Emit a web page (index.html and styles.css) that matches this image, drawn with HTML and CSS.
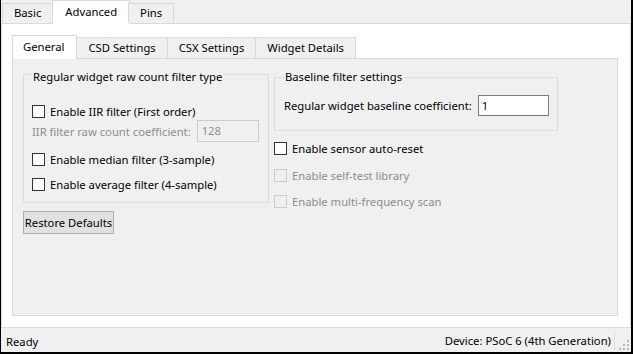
FILE: index.html
```html
<!DOCTYPE html>
<html lang="en">
<head>
  <meta charset="UTF-8">
  <title>CapSense Configurator - Advanced</title>
  <link rel="stylesheet" href="styles.css">
</head>
<body>
  <div class="window">
    <div class="tabstrip outer-tabs">
      <div class="tab">Basic</div>
      <div class="tab active">Advanced</div>
      <div class="tab">Pins</div>
    </div>

    <div class="outer-page">
      <div class="tabstrip inner-tabs">
        <div class="tab active">General</div>
        <div class="tab">CSD Settings</div>
        <div class="tab">CSX Settings</div>
        <div class="tab">Widget Details</div>
      </div>

      <div class="inner-page">
        <div class="col-left">
          <div class="group raw-group">
            <span class="group-title">Regular widget raw count filter type</span>
            <label class="check row-iir"><span class="box"></span>Enable IIR filter (First order)</label>
            <div class="field disabled">
              <span>IIR filter raw count coefficient:</span>
              <span class="input coef-input">128</span>
            </div>
            <label class="check row-median"><span class="box"></span>Enable median filter (3-sample)</label>
            <label class="check row-average"><span class="box"></span>Enable average filter (4-sample)</label>
          </div>
          <button class="btn">Restore Defaults</button>
        </div>

        <div class="col-right">
          <div class="group baseline-group">
            <span class="group-title">Baseline filter settings</span>
            <div class="field">
              <span>Regular widget baseline coefficient:</span>
              <span class="input baseline-input">1</span>
            </div>
          </div>
          <label class="check row-reset"><span class="box"></span>Enable sensor auto-reset</label>
          <label class="check disabled row-selftest"><span class="box"></span>Enable self-test library</label>
          <label class="check disabled row-multi"><span class="box"></span>Enable multi-frequency scan</label>
        </div>
      </div>
    </div>

    <div class="statusbar">
      <span class="status-text">Ready</span>
      <span class="device">Device: PSoC 6 (4th Generation)</span>
      <svg class="grip" width="12" height="12" viewBox="0 0 12 12">
        <rect x="9" y="1" width="2" height="2" fill="#b8b8b8"/>
        <rect x="9" y="5" width="2" height="2" fill="#b8b8b8"/>
        <rect x="5" y="5" width="2" height="2" fill="#b8b8b8"/>
        <rect x="9" y="9" width="2" height="2" fill="#b8b8b8"/>
        <rect x="5" y="9" width="2" height="2" fill="#b8b8b8"/>
        <rect x="1" y="9" width="2" height="2" fill="#b8b8b8"/>
      </svg>
    </div>
  </div>
</body>
</html>
```

FILE: styles.css
```css
body {
  margin: 0;
  font-family: 'Noto Sans', 'Segoe UI', Tahoma, sans-serif;
  font-size: 11.25px;
  color: #000;
  background-color: #fff;
}

.window {
  width: 633px;
  height: 354px;
  box-sizing: border-box;
  border-left: 1px solid #000;
  border-right: 2px solid #000;
  border-bottom: 2px solid #000;
  background-color: #f0f0f0;
  display: flex;
  flex-direction: column;
}

/* tabs */

.tabstrip {
  display: flex;
  align-items: flex-end;
  position: relative;
  z-index: 1;
}

.tab {
  box-sizing: border-box;
  height: 20px;
  line-height: 18px;
  padding: 0 11px;
  background-color: #f0f0f0;
  border: 1px solid #d9d9d9;
  border-bottom: none;
  margin-left: -1px;
  white-space: nowrap;
}

.tab:first-child {
  margin-left: 0;
}

.tab.active {
  height: 24px;
  line-height: 21px;
  padding: 0 12px;
  background-color: #fff;
  margin-bottom: -1px;
}

.outer-tabs {
  height: 23px;
  padding-left: 1px;
}

.outer-tabs .tab.active {
  margin-left: -1px;
  margin-right: -1px;
}

.outer-page {
  height: 305px;
  box-sizing: border-box;
  background-color: #fff;
  border: 1px solid #d9d9d9;
  padding: 11px 12px 11px 10px;
  display: flex;
  flex-direction: column;
}

.inner-tabs {
  height: 23px;
}

.inner-tabs .tab {
  height: 21px;
  line-height: 20px;
}

.inner-tabs .tab.active {
  height: 24px;
  line-height: 22px;
  padding: 0 12px 0 10px;
}

.inner-page {
  flex: 1;
  background-color: #f0f0f0;
  border: 1px solid #d9d9d9;
  padding: 15px 10px 0 10px;
  display: flex;
  align-items: flex-start;
  gap: 5px;
}

/* group boxes */

.col-left,
.col-right {
  display: flex;
  flex-direction: column;
  align-items: flex-start;
}

.group {
  box-sizing: border-box;
  border: 1px solid #dcdcdc;
  display: flex;
  flex-direction: column;
  align-items: flex-start;
}

.group-title {
  line-height: 15px;
  background-color: #f0f0f0;
  padding: 0 1px;
}

.raw-group {
  width: 246px;
  height: 129px;
  padding: 0 0 0 8px;
}

.raw-group .group-title {
  margin-top: -6px;
  margin-bottom: 16px;
}

.baseline-group {
  width: 284px;
  height: 54px;
  margin-top: 3px;
  padding: 0 0 0 9px;
}

.baseline-group .group-title {
  margin-top: -9px;
  margin-bottom: 11px;
}

/* checkboxes and fields */

.check {
  display: flex;
  align-items: center;
  height: 22px;
  white-space: nowrap;
}

.box {
  box-sizing: border-box;
  width: 13px;
  height: 13px;
  border: 1px solid #333;
  background-color: #fff;
  margin-right: 5px;
}

.check.disabled {
  color: #8d8d8d;
}

.check.disabled .box {
  border-color: #cccccc;
  background-color: #f0f0f0;
}

.field {
  display: flex;
  align-items: center;
  gap: 6px;
  white-space: nowrap;
}

.field.disabled {
  color: #8d8d8d;
  margin-top: -2px;
}

.input {
  box-sizing: border-box;
  height: 21px;
  line-height: 19px;
  padding: 0 4px;
  border: 1px solid #7a7a7a;
  background-color: #fff;
}

.coef-input {
  width: 62px;
  height: 22px;
  border-color: #cccccc;
  background-color: #f0f0f0;
}

.baseline-input {
  width: 71px;
  padding-left: 3px;
}

.row-median {
  margin-top: 6px;
}

.row-average {
  margin-top: 3px;
}

.row-reset {
  margin-top: 6px;
}

.row-selftest {
  margin-top: 5px;
}

.row-multi {
  margin-top: 4px;
}

.btn {
  margin-top: 8px;
  width: 91px;
  height: 23px;
  padding: 0;
  font-family: inherit;
  font-size: 11.25px;
  white-space: nowrap;
  color: #000;
  background-color: #e1e1e1;
  border: 1px solid #adadad;
  border-radius: 0;
}

/* status bar */

.statusbar {
  flex: 1;
  display: flex;
  align-items: center;
  padding: 2px 0 0 5px;
}

.status-text {
  flex: 1;
}

.device {
  padding-right: 3px;
  border-right: 1px solid #dcdcdc;
  line-height: 18px;
}

.grip {
  align-self: flex-end;
  margin: 0 1px 1px 3px;
}
```
